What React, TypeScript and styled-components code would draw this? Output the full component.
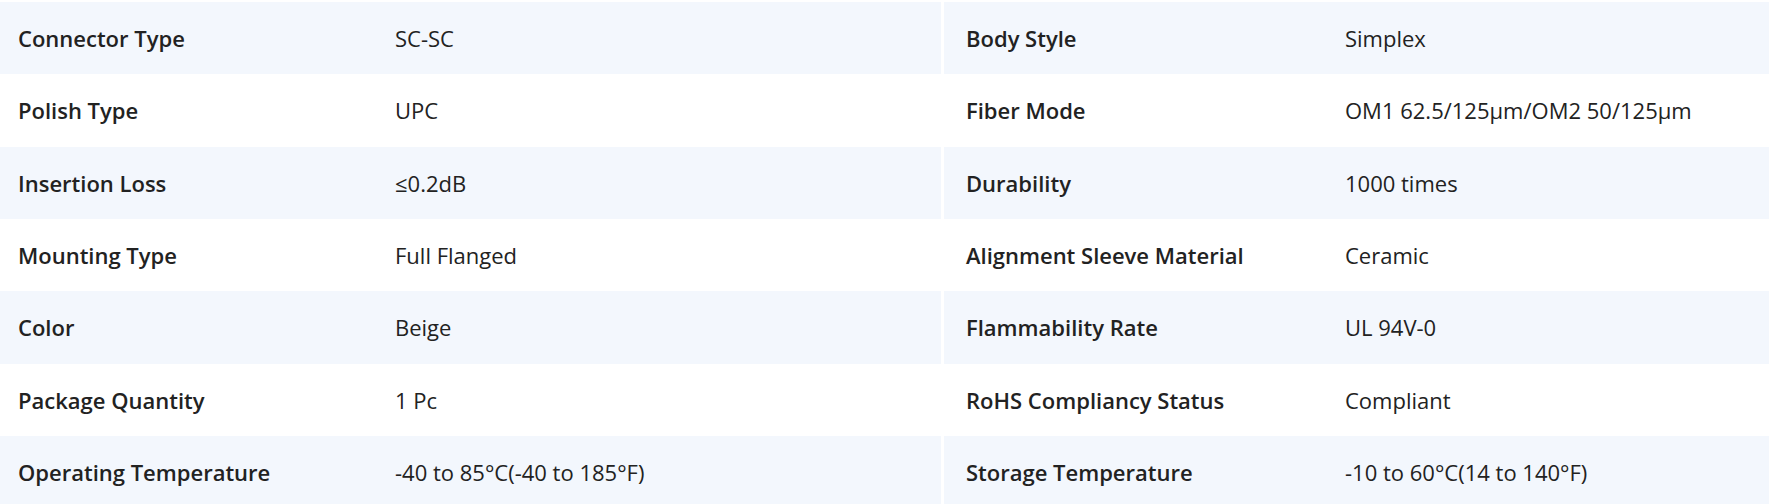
import React from "react";
import styled, { createGlobalStyle } from "styled-components";

const Global = createGlobalStyle`
  html, body { margin: 0; padding: 0; background: #ffffff; }
  body { font-family: "Open Sans", "Noto Sans", sans-serif; color: #222222; }
`;

const Wrapper = styled.div`
  display: grid;
  grid-template-columns: 941px 1fr;
  column-gap: 3px;
  padding-top: 2px;
  width: 1769px;
`;

const Column = styled.div`
  display: flex;
  flex-direction: column;
`;

const Row = styled.div<{ $striped: boolean; $inset: number; $labelWidth: number }>`
  display: grid;
  grid-template-columns: ${(p) => p.$labelWidth}px 1fr;
  align-items: center;
  height: 72.33px;
  flex: none;
  padding-left: ${(p) => p.$inset}px;
  background: ${(p) => (p.$striped ? "#f3f7fd" : "#ffffff")};
  font-size: 22px;
  line-height: 30px;
`;

const Label = styled.div`
  font-weight: 600;
  color: #222222;
`;

const Value = styled.div`
  font-weight: 400;
  color: #222222;
`;

const left: [string, string][] = [
  ["Connector Type", "SC-SC"],
  ["Polish Type", "UPC"],
  ["Insertion Loss", "≤0.2dB"],
  ["Mounting Type", "Full Flanged"],
  ["Color", "Beige"],
  ["Package Quantity", "1 Pc"],
  ["Operating Temperature", "-40 to 85°C(-40 to 185°F)"],
];

const right: [string, string][] = [
  ["Body Style", "Simplex"],
  ["Fiber Mode", "OM1 62.5/125μm/OM2 50/125μm"],
  ["Durability", "1000 times"],
  ["Alignment Sleeve Material", "Ceramic"],
  ["Flammability Rate", "UL 94V-0"],
  ["RoHS Compliancy Status", "Compliant"],
  ["Storage Temperature", "-10 to 60°C(14 to 140°F)"],
];

function SpecColumn({
  rows,
  inset,
  labelWidth,
}: {
  rows: [string, string][];
  inset: number;
  labelWidth: number;
}) {
  return (
    <Column>
      {rows.map(([k, v], i) => (
        <Row key={k} $striped={i % 2 === 0} $inset={inset} $labelWidth={labelWidth}>
          <Label>{k}</Label>
          <Value>{v}</Value>
        </Row>
      ))}
    </Column>
  );
}

export default function App() {
  return (
    <>
      <Global />
      <Wrapper>
        <SpecColumn rows={left} inset={18} labelWidth={377} />
        <SpecColumn rows={right} inset={22} labelWidth={379} />
      </Wrapper>
    </>
  );
}
